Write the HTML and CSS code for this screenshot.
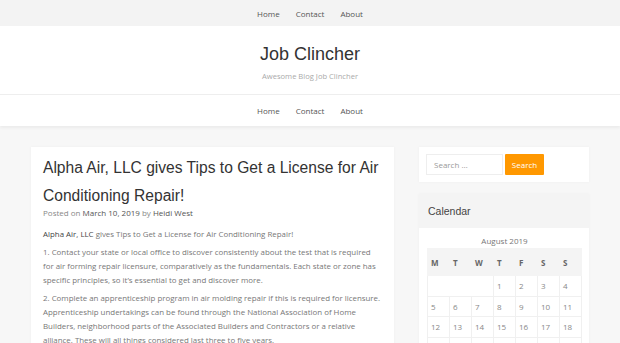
FILE: index.html
```html
<!DOCTYPE html>
<html lang="en">
<head>
<meta charset="utf-8">
<title>Job Clincher</title>
<link rel="stylesheet" href="styles.css">
</head>
<body>
<nav class="topbar">
  <a href="#">Home</a>
  <a href="#">Contact</a>
  <a href="#">About</a>
</nav>
<header class="site-header">
  <h1 class="site-title">Job Clincher</h1>
  <p class="tagline">Awesome Blog Job Clincher</p>
</header>
<nav class="mainnav">
  <a href="#">Home</a>
  <a href="#">Contact</a>
  <a href="#">About</a>
</nav>
<div class="container">
  <article class="post">
    <h2 class="post-title">Alpha Air, LLC gives Tips to Get a License for Air Conditioning Repair!</h2>
    <div class="meta">Posted on <a href="#">March 10, 2019</a> by <a href="#">Heidi West</a></div>
    <div class="content">
      <p><a href="#">Alpha Air, LLC</a> gives Tips to Get a License for Air Conditioning Repair!</p>
      <p>1. Contact your state or local office to discover consistently about the test that is required for air forming repair licensure, comparatively as the fundamentals. Each state or zone has specific principles, so it’s essential to get and discover more.</p>
      <p>2. Complete an apprenticeship program in air molding repair if this is required for licensure. Apprenticeship undertakings can be found through the National Association of Home Builders, neighborhood parts of the Associated Builders and Contractors or a relative alliance. These will all things considered last three to five years.</p>
    </div>
  </article>
  <aside class="sidebar">
    <div class="widget search-widget">
      <form class="search-form">
        <input class="search-field" type="search" placeholder="Search …">
        <button class="search-btn" type="button">Search</button>
      </form>
    </div>
    <div class="widget calendar-widget">
      <h3 class="widget-title">Calendar</h3>
      <div class="widget-body">
        <table class="calendar">
          <caption>August 2019</caption>
          <thead>
            <tr><th>M</th><th>T</th><th>W</th><th>T</th><th>F</th><th>S</th><th>S</th></tr>
          </thead>
          <tbody>
            <tr><td colspan="3" class="pad"></td><td>1</td><td>2</td><td>3</td><td>4</td></tr>
            <tr><td>5</td><td>6</td><td>7</td><td>8</td><td>9</td><td>10</td><td>11</td></tr>
            <tr><td>12</td><td>13</td><td>14</td><td>15</td><td>16</td><td>17</td><td>18</td></tr>
            <tr><td>19</td><td>20</td><td>21</td><td>22</td><td>23</td><td>24</td><td>25</td></tr>
          </tbody>
        </table>
      </div>
    </div>
  </aside>
</div>
</body>
</html>
```
FILE: styles.css
```css
* { box-sizing: border-box; }
html, body { margin: 0; padding: 0; }
body {
  background: #f7f7f7;
  font-family: "Open Sans", "DejaVu Sans", sans-serif;
  color: #666;
  overflow: hidden;
  height: 343px;
}
a { text-decoration: none; color: inherit; }

.topbar {
  height: 26px;
  background: #f3f3f3;
  display: flex;
  justify-content: center;
  align-items: center;
  gap: 16px;
  font-size: 8px;
  color: #555;
}

.site-header {
  background: #fff;
  height: 69px;
  border-bottom: 1px solid #eee;
  text-align: center;
  padding-top: 16px;
}
.site-title {
  margin: 0;
  font-family: "Liberation Sans", Arial, sans-serif;
  font-weight: normal;
  font-size: 18px;
  line-height: 24px;
  color: #333;
}
.tagline {
  margin: 4px 0 0;
  font-size: 7.6px;
  line-height: 12px;
  color: #aaa;
}

.mainnav {
  height: 31px;
  background: #fff;
  display: flex;
  justify-content: center;
  align-items: center;
  gap: 16px;
  font-size: 8px;
  color: #555;
  box-shadow: 0 2px 3px rgba(0,0,0,0.05);
  position: relative;
}

.container {
  width: 558px;
  margin: 21px auto 0;
  display: grid;
  grid-template-columns: 363px 170px;
  gap: 25px;
  align-items: start;
}

.post {
  background: #fff;
  padding: 7px 12px 12px 12px;
  box-shadow: 0 0 3px rgba(0,0,0,0.04);
}
.post-title {
  margin: 0;
  font-family: "Liberation Sans", Arial, sans-serif;
  font-weight: normal;
  font-size: 15.6px;
  line-height: 28px;
  color: #333;
}
.meta {
  font-size: 8px;
  line-height: 10px;
  margin-top: -2px;
  color: #888;
}
.meta a { color: #555; }
.content { margin-top: 9px; }
.content p {
  margin: 0 0 4px;
  font-size: 7.9px;
  line-height: 14px;
  color: #777;
}
.content p a { color: #444; }

.widget {
  background: #fff;
  box-shadow: 0 0 3px rgba(0,0,0,0.04);
}
.search-widget { padding: 7px; }
.search-form { display: flex; gap: 2px; }
.search-field {
  width: 77px;
  height: 21px;
  border: 1px solid #eee;
  padding: 0 7px;
  font-family: inherit;
  font-size: 8px;
  color: #555;
  outline: none;
}
.search-field::placeholder { color: #999; }
.search-btn {
  width: 39px;
  height: 21px;
  border: 0;
  border-radius: 1px;
  background: #ff9800;
  color: #fff;
  font-family: inherit;
  font-size: 8px;
  padding: 0;
}

.calendar-widget { margin-top: 12px; }
.widget-title {
  margin: 0;
  background: #f4f4f4;
  height: 34px;
  line-height: 34px;
  padding-left: 9px;
  font-family: "Liberation Sans", Arial, sans-serif;
  font-weight: normal;
  font-size: 10.5px;
  color: #444;
}
.widget-body { padding: 6px 8px 8px; }
.calendar {
  width: 155px;
  border-collapse: collapse;
  table-layout: fixed;
  font-size: 8px;
}
.calendar caption {
  line-height: 14px;
  color: #777;
  padding-bottom: 0;
}
.calendar th {
  background: #f4f4f4;
  height: 27px;
  text-align: left;
  padding: 0 0 0 3px;
  font-weight: 700;
  color: #666;
  border: 1px solid #f4f4f4;
}
.calendar td {
  height: 20.5px;
  padding: 0 0 0 3px;
  color: #888;
  border: 1px solid #f0f0f0;
}
```
